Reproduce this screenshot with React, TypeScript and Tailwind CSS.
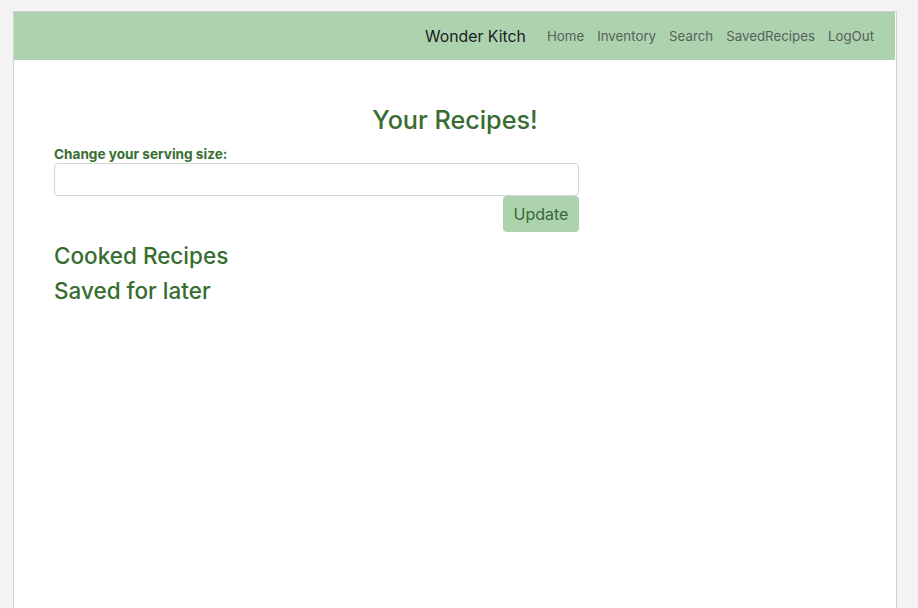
import React from "react";

const links = ["Home", "Inventory", "Search", "SavedRecipes", "LogOut"];

export default function App() {
  return (
    <div
      className="h-[608px] overflow-hidden bg-[#f3f3f3] pt-[11px] pl-[13px]"
      style={{ fontFamily: "Inter, 'Liberation Sans', sans-serif" }}
    >
      <div className="h-[620px] w-[884px] border-x border-t border-[#d2d2d2] bg-white">
        {/* Navbar */}
        <nav className="mr-px flex h-[48px] items-center justify-end bg-[#acd3ae] pt-[2px] pr-[21px]">
          <span className="mr-[21px] text-[15.8px] text-[#1c1c1c]">Wonder Kitch</span>
          <div className="flex items-center gap-[13px] text-[13.3px] text-[#5a5f5a]">
            {links.map((l) => (
              <a key={l} href="#">
                {l}
              </a>
            ))}
          </div>
        </nav>

        {/* Content */}
        <main className="pt-[44px] text-[#376d31]">
          <h1 className="text-center text-[25.2px] font-medium leading-[32px]">Your Recipes!</h1>
          <div className="pl-[40px]">
            <form className="mt-[10px] w-[525px]">
              <label className="block text-[13.6px] font-bold leading-[16px]">
                Change your serving size:
              </label>
              <input
                type="text"
                className="block mt-[1px] h-[33px] w-full rounded-[4px] border border-[#d4d4d4] bg-white"
              />
              <div className="flex justify-end">
                <button
                  type="button"
                  className="h-[36px] w-[76px] rounded-[4px] bg-[#acd3ae] text-[16px] text-[#3a6b37]"
                >
                  Update
                </button>
              </div>
            </form>
            <h2 className="mt-[9px] text-[22.5px] font-medium leading-[30px]">Cooked Recipes</h2>
            <h2 className="mt-[5px] text-[22.5px] font-medium leading-[30px]">Saved for later</h2>
          </div>
        </main>
      </div>
    </div>
  );
}
